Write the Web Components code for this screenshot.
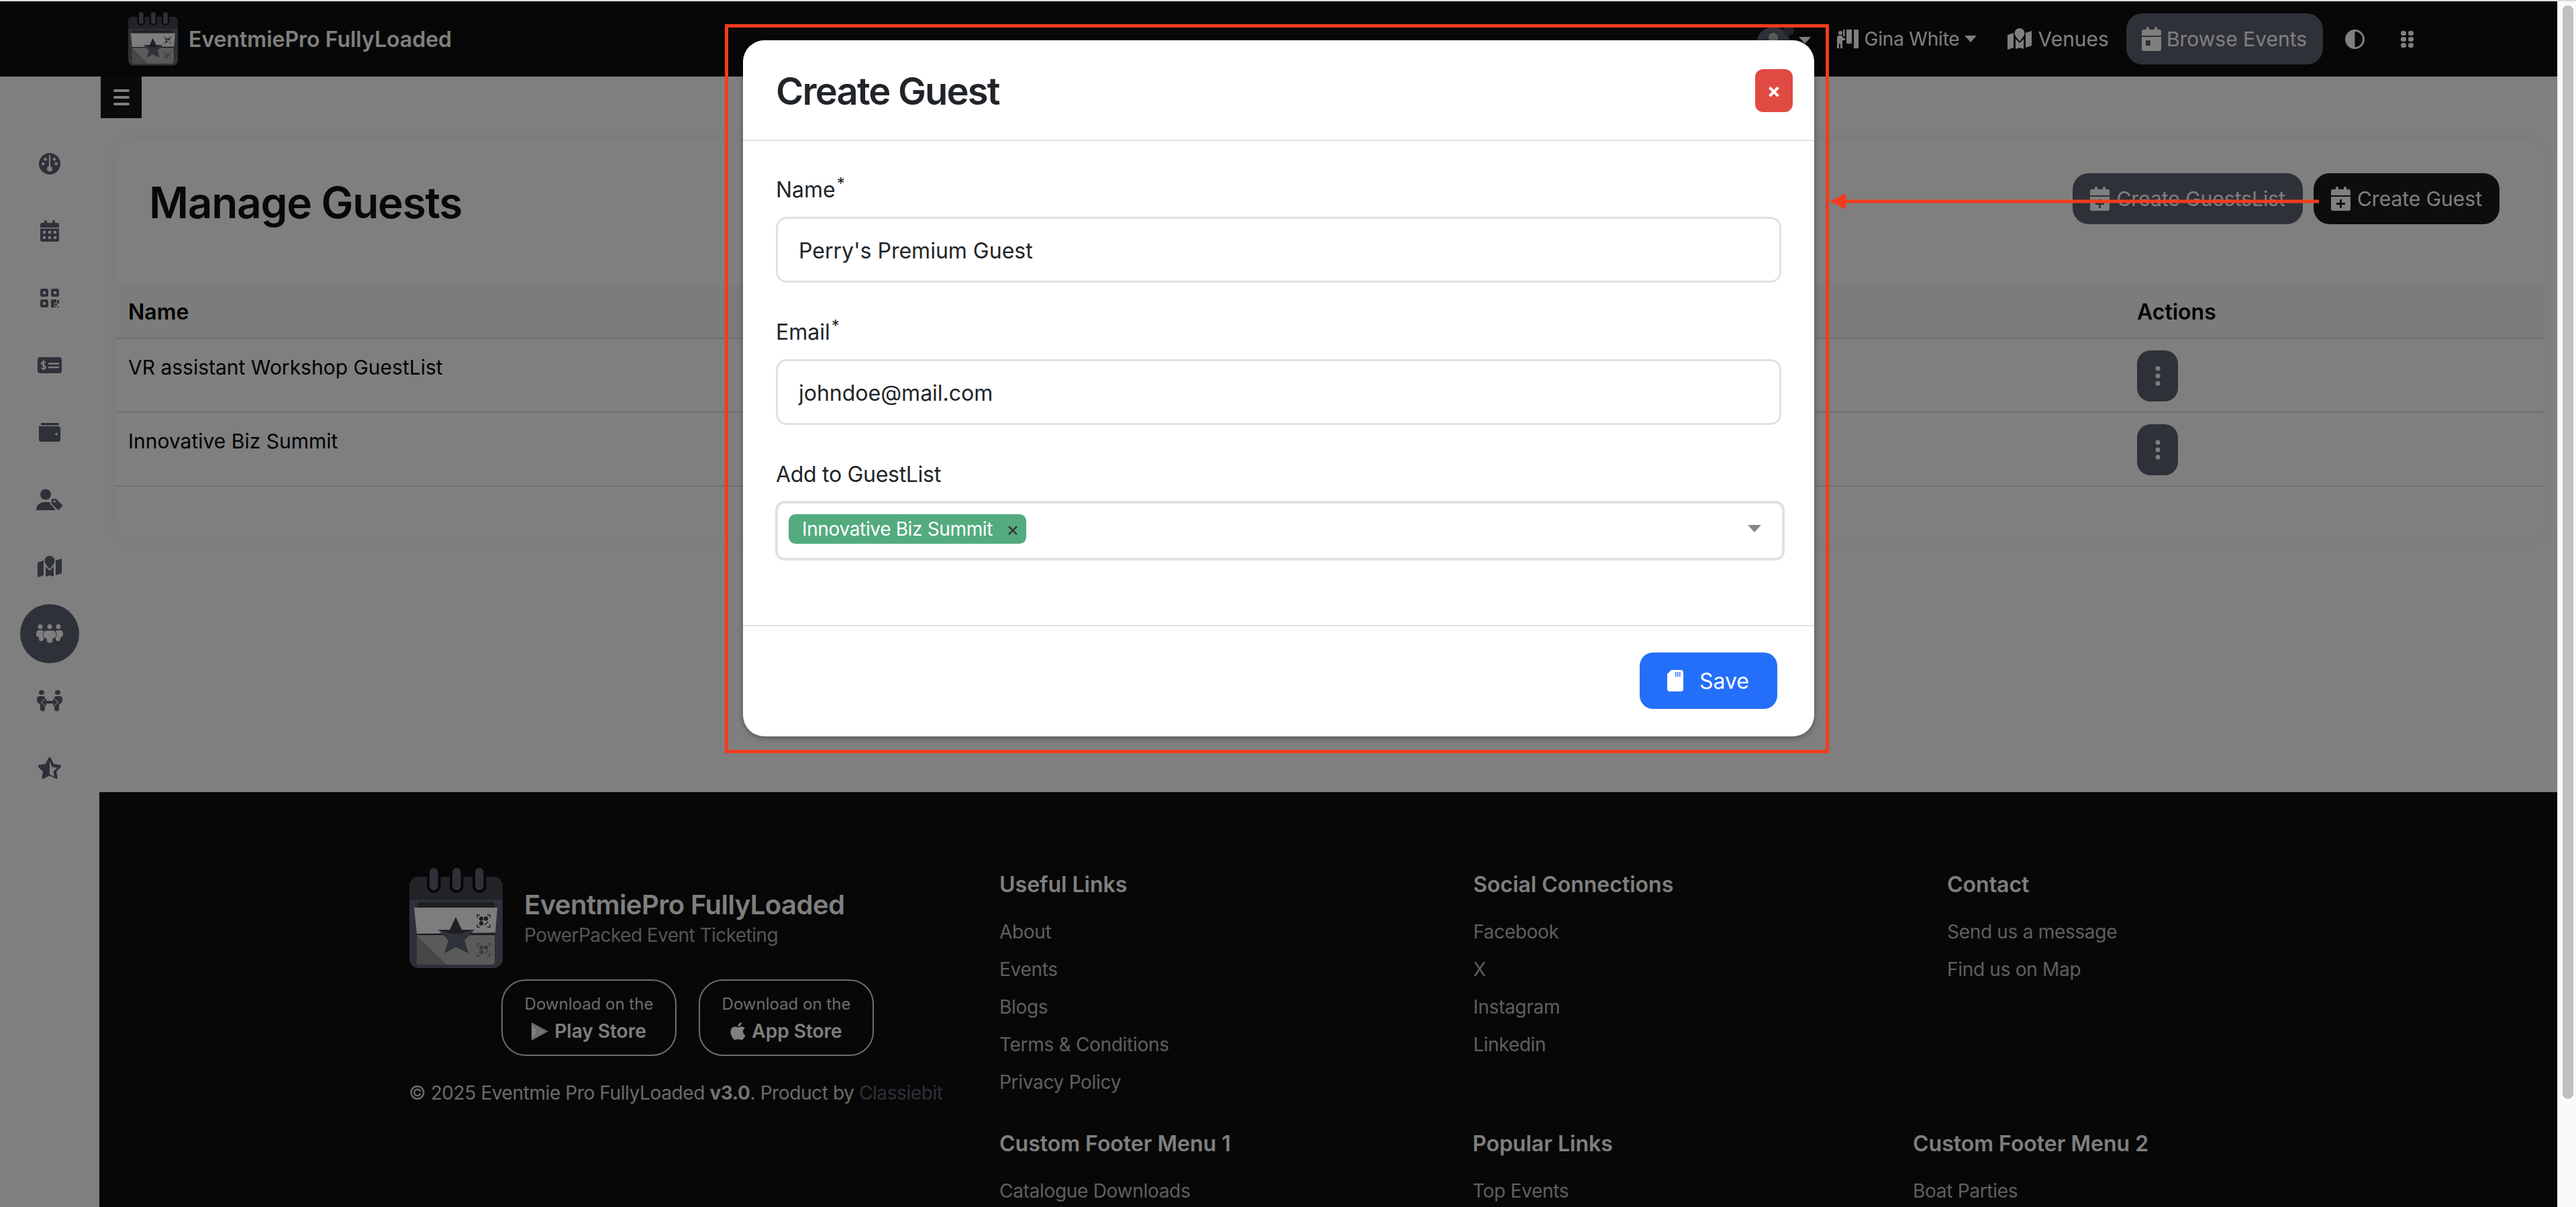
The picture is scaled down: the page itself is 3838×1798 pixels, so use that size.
<!DOCTYPE html>
<html lang="en">
<head>
<meta charset="utf-8">
<title>Manage Guests</title>
<style>
  html,body{ margin:0; padding:0; background:#fff; }
  body{ font-family:Inter,"Noto Sans",sans-serif; width:3838px; height:1798px; overflow:hidden; }
</style>
</head>
<body>
<eb-app>
  <eb-navbar slot="nav"></eb-navbar>
  <eb-sidebar slot="side"></eb-sidebar>
  <eb-guests slot="main"></eb-guests>
  <eb-footer slot="foot"></eb-footer>
  <eb-modal slot="modal" heading="Create Guest">
    <eb-field label="Name" required value="Perry's Premium Guest"></eb-field>
    <eb-field label="Email" required value="johndoe@mail.com"></eb-field>
    <eb-tags label="Add to GuestList" tag="Innovative Biz Summit"></eb-tags>
  </eb-modal>
  <eb-callout slot="modal"></eb-callout>
</eb-app>

<script>
const ICONS = {
  gauge:[32,32,`<path d="M16 0a16 16 0 1 0 0 32a16 16 0 0 0 0-32z"/>
    <g fill="var(--cut,#fff)"><circle cx="6.3" cy="16" r="2.2"/><circle cx="9.7" cy="9.3" r="2.2"/><circle cx="23" cy="9.3" r="2.2"/><circle cx="25.6" cy="16" r="2.2"/><rect x="14.9" y="3" width="2.2" height="18"/><circle cx="16" cy="23.5" r="4"/></g>`],
  calendar:[28,32,`<rect x="6" y="0" width="4" height="7" rx="2"/><rect x="18" y="0" width="4" height="7" rx="2"/><path d="M3 4h22a3 3 0 0 1 3 3v4H0V7a3 3 0 0 1 3-3z"/><path d="M0 12.5h28V29a3 3 0 0 1-3 3H3a3 3 0 0 1-3-3z"/>
    <g fill="var(--cut,#fff)"><rect x="4" y="16" width="4" height="4"/><rect x="12" y="16" width="4" height="4"/><rect x="20" y="16" width="4" height="4"/><rect x="4" y="24" width="4" height="4"/><rect x="12" y="24" width="4" height="4"/><rect x="20" y="24" width="4" height="4"/></g>`],
  qr:[28,28,`<rect width="12" height="12" rx="3"/><rect x="16" width="12" height="12" rx="3"/><rect y="16" width="12" height="12" rx="3"/><rect x="16" y="16" width="5" height="12"/><rect x="21" y="16" width="3" height="5"/><rect x="25" y="17" width="3" height="5"/><rect x="22" y="22" width="3" height="3"/><rect x="22" y="26" width="2" height="2"/><rect x="26" y="26" width="2" height="2"/>
    <g fill="var(--cut,#fff)"><rect x="4" y="4" width="4" height="4"/><rect x="20" y="4" width="4" height="4"/><rect x="4" y="20" width="4" height="4"/></g>`],
  ticket:[36,24,`<rect width="36" height="24" rx="4"/><g fill="var(--cut,#fff)"><rect x="16" y="8.5" width="16" height="2.4"/><rect x="16" y="14" width="16" height="2.4"/></g><path d="M12 8.5c-1-1.5-6-2-6 1c0 3 6 2.5 6 5.5c0 3-5 2.5-6.5 1M9 4.5v15" fill="none" stroke="var(--cut,#fff)" stroke-width="2"/>`],
  wallet:[32,28,`<path d="M3 0h26a2 2 0 0 1 0 3.500H3z"/><path d="M2.500 5H29a3 3 0 0 1 3 3v17a3 3 0 0 1-3 3H3a3 3 0 0 1-3-3V4a3 3 0 0 0 2.500 1z"/><circle cx="26" cy="16.500" r="1.800" fill="var(--cut,#fff)"/>`],
  usertag:[40,32,`<circle cx="14" cy="8.500" r="8"/><path d="M0 32c0-8 6-12 12-12h8l2 3l7 9z"/><path d="M23 14.500h7l9.500 9.500a2 2 0 0 1 0 2.500L34 32a2 2 0 0 1-2.500 0L22 22.500v-7z" stroke="var(--cut,#fff)" stroke-width="1.500"/><circle cx="27" cy="19" r="1.800" fill="var(--cut,#fff)"/>`],
  map:[36,32,`<path d="M0 10l9-3v22l-9 3z"/><path d="M27 7l9-3v22l-9 3z"/><path d="M12 16l6 6l6-6v15l-6-2l-6 2z"/><path d="M18 0a7.500 7.500 0 0 1 7.500 7.500c0 3.500-4.500 9-7.500 12c-3-3-7.500-8.500-7.500-12A7.500 7.500 0 0 1 18 0z"/>`],
  group:[40,28,`<circle cx="6" cy="3.500" r="3.500"/><circle cx="20" cy="3.500" r="3.500"/><circle cx="33" cy="3.500" r="3.500"/><path d="M3 9h6c2 0 2 2 2 4v9c0 1-1 3-3 3H6c-2 0-2-4-2-6c-3 0-4-2-4-4c0-3 1-6 3-6z"/><path d="M37 9h-6c-2 0-2 2-2 4v9c0 1 1 3 3 3h2c2 0 2-4 2-6c3 0 4-2 4-4c0-3-1-6-3-6z"/><path d="M16 9h8c4 0 6 3 6 7s-3 5-5 5c0 3-1 7-3 7h-4c-2 0-3-4-3-7c-2 0-5-1-5-5s2-7 6-7z" stroke="var(--cut,#fff)" stroke-width="1"/>`],
  swap:[38,32,`<ellipse cx="7" cy="3.500" rx="4" ry="3.500"/><ellipse cx="31" cy="3.500" rx="4" ry="3.500"/><path d="M3 9h6c2 0 3 1 3 3v16a3.500 3.500 0 0 1-7 0V21C2 20 0 18 0 14c0-3 1-5 3-5z"/><path d="M35 9h-6c-2 0-3 1-3 3v16a3.500 3.500 0 0 0 7 0V21c3-1 5-3 5-7c0-3-1-5-3-5z"/><path d="M7 18l7-6v4h10v-4l7 6l-7 6v-4H14v4z" stroke="var(--cut,#fff)" stroke-width="1.800" paint-order="stroke"/>`],
  star:[34,32,`<path fill-rule="evenodd" d="M17 0c1 0 1.500.5 2 1.500l4 8.500l9.500 1.500c1.500.5 2 2 1 3L27 21.500l1.800 8.500c.2 1.500-1 2.500-2.500 2L17 27.500L7.700 32c-1.500.5-2.700-.5-2.500-2L7 21.500L0 14.500c-1-1-.5-2.500 1-3L10.500 10l4.500-8.500C15.500.5 16 0 17 0zM17 6v19.500l6.800 3.500l-1.300-8l5.500-5.300l-7.600-1.100z"/>`],
  guest:[32,28,`<circle cx="5" cy="5" r="3"/><path d="M2 9h5l3 4h2v3H8v12H5v-7H3v7H0V12c0-2 1-3 2-3z"/><rect x="9" y="0" width="2.500" height="10"/><path d="M14 0h8v22l-2-2l-2 2l-2-2l-2 2z"/><rect x="25" y="0" width="7" height="28" rx="1"/>`],
  browse:[29,36,`<rect x="7" y="0" width="4" height="8" rx="2"/><rect x="19" y="0" width="4" height="8" rx="2"/><path d="M3 4h23a3 3 0 0 1 3 3v6H0V7a3 3 0 0 1 3-3z"/><path d="M0 15h29v18a3 3 0 0 1-3 3H3a3 3 0 0 1-3-3z"/><rect x="6" y="20" width="7" height="8" fill="var(--cut,#5f6372)"/>`],
  calplus:[29,36,`<rect x="7" y="0" width="4" height="8" rx="2"/><rect x="19" y="0" width="4" height="8" rx="2"/><path d="M3 4h23a3 3 0 0 1 3 3v6H0V7a3 3 0 0 1 3-3z"/><path d="M0 15h29v18a3 3 0 0 1-3 3H3a3 3 0 0 1-3-3z"/><path d="M13 19h3v5h5v3h-5v5h-3v-5H8v-3h5z" fill="var(--cut,#0e0e0e)"/>`],
  contrast:[29,29,`<path fill-rule="evenodd" d="M14.500 0a14.500 14.500 0 1 0 0 29a14.500 14.500 0 0 0 0-29zM14.500 3v23a11.500 11.500 0 0 0 0-23z"/>`],
  grid:[19,25,`<rect width="8" height="7" rx="3"/><rect x="11" width="8" height="7" rx="3"/><rect y="9" width="8" height="7" rx="3"/><rect x="11" y="9" width="8" height="7" rx="3"/><rect y="18" width="8" height="7" rx="3"/><rect x="11" y="18" width="8" height="7" rx="3"/>`],
  dots:[8,30,`<circle cx="4" cy="4" r="3.500"/><circle cx="4" cy="15" r="3.500"/><circle cx="4" cy="26" r="3.500"/>`],
  save:[24,32,`<path fill-rule="evenodd" d="M6 0h14a4 4 0 0 1 4 4v24a4 4 0 0 1-4 4H4a4 4 0 0 1-4-4V6zM15 3v7h1.500V3zM18 3v7h1.500V3zM12 3v7h1.500V3z"/>`],
  play:[25,27,`<path d="M0 0L25 13.500L0 27L9 13.500z" opacity=".8"/><path d="M0 0L9 13.500L0 27z"/><path d="M3 3L20 13.500L3 24L11 13.500z" opacity=".5"/>`],
  apple:[384,512,`<path d="M318.700 268.700c-.2-36.700 16.400-64.400 50-84.800-18.800-26.900-47.200-41.700-84.700-44.600-35.500-2.800-74.300 20.700-88.500 20.700-15 0-49.400-19.700-76.400-19.700C63.300 141.200 4 184.800 4 273.500q0 39.300 14.400 81.200c12.800 36.700 59 126.700 107.200 125.200 25.200-.6 43-17.900 75.800-17.900 31.800 0 48.300 17.900 76.400 17.900 48.600-.7 90.400-82.500 102.600-119.300-65.200-30.700-61.700-90-61.700-91.900zm-56.600-164.200c27.300-32.400 24.800-61.900 24-72.500-24.100 1.400-52 16.400-67.900 34.900-17.500 19.800-27.800 44.300-25.600 71.900 26.100 2 49.900-11.400 69.500-34.300z"/>`]
};

customElements.define('eb-icon', class extends HTMLElement {
  constructor(){ super(); this.attachShadow({mode:'open'}); }
  connectedCallback(){
    const [w,h,inner] = ICONS[this.getAttribute('name')];
    const width = this.getAttribute('w') || w;
    const height = this.getAttribute('h') || h;
    this.shadowRoot.innerHTML = `
    <style>
      :host{ display:inline-flex; flex:none; line-height:0; }
      svg{ display:block; fill:currentColor; }
    </style>
    <svg xmlns="http://www.w3.org/2000/svg" width="${width}" height="${height}" viewBox="0 0 ${w} ${h}">${inner}</svg>`;
  }
});

customElements.define('eb-logo', class extends HTMLElement {
  constructor(){ super(); this.attachShadow({mode:'open'}); }
  connectedCallback(){
    const w = this.getAttribute('w'), h = this.getAttribute('h');
    const bg = this.getAttribute('bg') || '#0e0e0e';
    const qr = (x,y,c) => `<g transform="translate(${x} ${y})" fill="none" stroke="${c}" stroke-width="1.500"><path d="M0 4V0h4M15 0h4v4M0 14v4h4M19 14v4h-4"/><circle cx="6" cy="5.500" r="2.400" fill="${c}"/><circle cx="13" cy="5.500" r="2.400" fill="${c}"/><circle cx="6" cy="12.500" r="2.400" fill="${c}"/><path d="M11 15l5-5"/></g>`;
    this.shadowRoot.innerHTML = `
    <style>
      :host{ display:block; flex:none; line-height:0; }
    </style>
    <svg xmlns="http://www.w3.org/2000/svg" width="${w}" height="${h}" viewBox="0 0 139 150">
      <rect y="13" width="139" height="136" rx="14" fill="#5f6372"/>
      <path d="M14 13h111a14 14 0 0 1 14 14v20H0V27a14 14 0 0 1 14-14z" fill="#44474f"/>
      <g fill="#5f6372" stroke="${bg}" stroke-width="4">
        <rect x="28" y="-2" width="16.500" height="37" rx="8"/>
        <rect x="62" y="-2" width="16.500" height="37" rx="8"/>
        <rect x="96" y="-2" width="16.500" height="37" rx="8"/>
      </g>
      <path d="M15 51h108a4 4 0 0 1 4 4v4H11v-4a4 4 0 0 1 4-4z" fill="#3c3e46"/>
      <path d="M7 59h124l-3 37l-117 2z" fill="#fafafa"/>
      <rect x="11" y="98" width="116" height="1.500" fill="#222"/>
      <path d="M11 100h116v40a4 4 0 0 1-4 4H15a4 4 0 0 1-4-4z" fill="#b4b4b4"/>
      <path d="M11 100l44 44H15a4 4 0 0 1-4-4z" fill="#8f8f8f"/>
      <path d="M69 73l9 19h19l-20 6H61l-20-6h19z" fill="#3c3e46"/>
      <path d="M61 98h16l20-6l-15 16l6 19l-19-9l-17 9l6-19l-15-16z" fill="#5f6372"/>
      ${qr(101,70,'#3c3e46')}
      ${qr(101,113,'#71747f')}
    </svg>`;
  }
});

customElements.define('eb-nav-link', class extends HTMLElement {
  constructor(){ super(); this.attachShadow({mode:'open'}); }
  connectedCallback(){
    this.shadowRoot.innerHTML = `
    <style>
      :host{ display:inline-flex; align-items:center; gap:9px; font-size:30px; color:#fff; height:76px; white-space:nowrap; }
      :host([pill]){ background:#5f6372; border-radius:24px; padding:0 24px 0 23px; gap:8px; --cut:#5f6372; }
      :host([small]){ font-size:28px; letter-spacing:-.2px; }
    </style>
    <slot></slot>`;
  }
});

customElements.define('eb-navbar', class extends HTMLElement {
  constructor(){ super(); this.attachShadow({mode:'open'}); }
  connectedCallback(){
    this.shadowRoot.innerHTML = `
    <style>
      :host{ display:flex; align-items:center; height:112px; background:#0e0e0e; padding:0 214px 0 191px; color:#fff; --cut:#0e0e0e; }
      .brand{ font-size:32px; font-weight:600; margin-left:16px; white-space:nowrap; }
      .right{ margin-left:auto; display:flex; align-items:center; }
      .avatar{ position:relative; width:50px; height:50px; border-radius:50%; background:#5f6372; margin-top:14px; }
      .avatar::before{ content:""; position:absolute; left:18px; top:9px; width:14px; height:14px; border-radius:50%; background:#b8b8b8; }
      .avatar::after{ content:""; position:absolute; right:-6px; top:-3px; width:16px; height:16px; border-radius:50%; background:#44474f; }
      .caret{ width:0; height:0; border:9px solid transparent; border-top:10px solid #fff; border-bottom:0; margin-left:8px; }
      .user-caret{ margin-right:46px; }
      .avatar-caret{ margin:4px 39px 0 13px; }
      .venues{ margin-right:26px; }
      .pill{ margin-right:33px; }
      .contrast{ margin-right:54px; }
    </style>
    <eb-logo w="74" h="80"></eb-logo>
    <span class="brand">EventmiePro FullyLoaded</span>
    <div class="right">
      <span class="avatar"></span><span class="caret avatar-caret"></span>
      <eb-nav-link small><eb-icon name="guest"></eb-icon><span>Gina White</span></eb-nav-link>
      <span class="caret user-caret"></span>
      <eb-nav-link class="venues"><eb-icon name="map" h="32"></eb-icon><span>Venues</span></eb-nav-link>
      <eb-nav-link class="pill" pill><eb-icon name="browse" w="29" h="36"></eb-icon><span>Browse Events</span></eb-nav-link>
      <eb-icon class="contrast" name="contrast"></eb-icon>
      <eb-icon name="grid"></eb-icon>
    </div>`;
  }
});

customElements.define('eb-sidebar', class extends HTMLElement {
  constructor(){ super(); this.attachShadow({mode:'open'}); }
  connectedCallback(){
    const items = ['gauge','calendar','qr','ticket','wallet','usertag','map','group','swap','star'];
    this.shadowRoot.innerHTML = `
    <style>
      :host{ display:flex; flex-direction:column; align-items:center; width:148px; flex:none; background:#fff; color:#5f6372; padding-top:80px; box-sizing:border-box; }
      .item{ height:100px; width:100%; display:flex; align-items:center; justify-content:center; }
      .on{ width:88px; height:88px; border-radius:50%; background:#5f6372; color:#fff; display:flex; align-items:center; justify-content:center; --cut:#5f6372; }
    </style>
    ${items.map(n => `<div class="item">${n==='group' ? `<div class="on"><eb-icon name="${n}"></eb-icon></div>` : `<eb-icon name="${n}"></eb-icon>`}</div>`).join('')}`;
  }
});

customElements.define('eb-button', class extends HTMLElement {
  constructor(){ super(); this.attachShadow({mode:'open'}); }
  connectedCallback(){
    this.shadowRoot.innerHTML = `
    <style>
      :host{ display:inline-flex; align-items:center; gap:10px; height:76px; padding:0 26px; border-radius:24px; background:#5f6372; color:#fff; font-size:30px; white-space:nowrap; --cut:#5f6372; }
      :host([dark]){ background:#1a1a1a; --cut:#1a1a1a; }
      :host([blue]){ background:#246ffa; height:84px; font-size:32px; padding:0 42px 0 41px; gap:24px; border-radius:20px; --cut:#246ffa; }
      :host([square]){ width:61px; padding:0; justify-content:center; border-radius:20px; }
    </style>
    <slot></slot>`;
  }
});

customElements.define('eb-row', class extends HTMLElement {
  constructor(){ super(); this.attachShadow({mode:'open'}); }
  connectedCallback(){
    this.shadowRoot.innerHTML = `
    <style>
      :host{ display:grid; grid-template-columns:2993px 1fr; height:110px; padding-left:17px; border-bottom:2px solid #dedede; box-sizing:border-box; font-size:30px; color:#000; }
      .name{ padding-top:20px; line-height:44px; }
      .act{ padding-top:17px; }
    </style>
    <div class="name"><slot></slot></div>
    <div class="act"><eb-button square><eb-icon name="dots"></eb-icon></eb-button></div>`;
  }
});

customElements.define('eb-guests', class extends HTMLElement {
  constructor(){ super(); this.attachShadow({mode:'open'}); }
  connectedCallback(){
    this.shadowRoot.innerHTML = `
    <style>
      :host{ display:block; position:relative; height:1066px; padding:95px 20px 0 26px; box-sizing:border-box; background:#fff; }
      .burger{ position:absolute; left:2px; top:0; width:61px; height:62px; background:#141414; display:flex; flex-direction:column; justify-content:center; align-items:center; gap:6px; }
      .burger i{ display:block; width:24px; height:4px; border-radius:2px; background:#fff; }
      .card{ height:597px; border-radius:24px; background:#fff; box-shadow:0 0 30px rgba(0,0,0,.05); overflow:hidden; }
      .top{ display:flex; align-items:flex-start; justify-content:space-between; height:215px; padding:0 66px 0 48px; }
      h1{ margin:0; font-size:64px; line-height:90px; margin-top:48px; font-weight:600; color:#111; letter-spacing:-1.3px; }
      .btns{ display:flex; gap:16px; margin-top:49px; }
      .head{ display:grid; grid-template-columns:2993px 1fr; height:81px; padding-left:17px; background:#f9f9f9; border-bottom:2px solid #dedede; box-sizing:border-box; font-size:32px; font-weight:600; color:#000; line-height:81px; }
    </style>
    <div class="burger"><i></i><i></i><i></i></div>
    <div class="card">
      <div class="top">
        <h1>Manage Guests</h1>
        <div class="btns">
          <eb-button><eb-icon name="calplus" w="29" h="36"></eb-icon><span>Create GuestsList</span></eb-button>
          <eb-button dark><eb-icon name="calplus" w="29" h="36"></eb-icon><span>Create Guest</span></eb-button>
        </div>
      </div>
      <div class="head"><span>Name</span><span>Actions</span></div>
      <eb-row>VR assistant Workshop GuestList</eb-row>
      <eb-row>Innovative Biz Summit</eb-row>
    </div>`;
  }
});

customElements.define('eb-footer-col', class extends HTMLElement {
  constructor(){ super(); this.attachShadow({mode:'open'}); }
  connectedCallback(){
    const links = (this.getAttribute('links')||'').split('|');
    this.shadowRoot.innerHTML = `
    <style>
      :host{ display:block; white-space:nowrap; }
      h4{ margin:0 0 22px; font-size:32px; line-height:40px; font-weight:600; color:#fff; }
      a{ display:block; font-size:28px; line-height:56px; color:#bebebe; text-decoration:none; letter-spacing:-.3px; }
    </style>
    <h4>${this.getAttribute('heading')}</h4>
    ${links.map(l => `<a href="#">${l}</a>`).join('')}`;
  }
});

customElements.define('eb-store', class extends HTMLElement {
  constructor(){ super(); this.attachShadow({mode:'open'}); }
  connectedCallback(){
    const isPlay = this.getAttribute('icon') === 'play';
    this.shadowRoot.innerHTML = `
    <style>
      :host{ display:flex; flex-direction:column; align-items:center; justify-content:center; width:261px; height:114px; box-sizing:border-box; border:2px solid #dcdcdc; border-radius:36px; color:#fff; }
      .a{ font-size:24px; line-height:40px; color:#d8d8d8; }
      .b{ display:flex; align-items:center; gap:9px; font-size:28px; line-height:40px; font-weight:600; }
    </style>
    <div class="a">Download on the</div>
    <div class="b">${isPlay ? '<eb-icon name="play"></eb-icon>' : '<eb-icon name="apple" w="23" h="30"></eb-icon>'}<slot></slot></div>`;
  }
});

customElements.define('eb-footer', class extends HTMLElement {
  constructor(){ super(); this.attachShadow({mode:'open'}); }
  connectedCallback(){
    this.shadowRoot.innerHTML = `
    <style>
      :host{ display:grid; grid-template-columns:879px 1fr; background:#0e0e0e; padding:113px 0 0 462px; color:#fff; height:618px; box-sizing:border-box; overflow:hidden; }
      .brand{ display:flex; align-items:center; gap:32px; height:150px; }
      .t{ font-size:40px; line-height:50px; font-weight:600; white-space:nowrap; letter-spacing:-.55px; }
      .s{ font-size:28px; line-height:40px; color:#aaa; white-space:nowrap; letter-spacing:-.55px; }
      .stores{ display:flex; gap:33px; margin:16px 0 0 137px; }
      .copy{ margin:35px 0 0 -1px; font-size:28px; line-height:40px; color:#d6d6d6; white-space:nowrap; letter-spacing:-.4px; }
      .copy b{ color:#e6e6e6; font-weight:700; }
      .copy a{ color:#5f6372; text-decoration:none; }
      .cols{ padding-top:5px; }
      .r1{ display:grid; grid-template-columns:706px 706px 1fr; margin-bottom:44px; }
      .r2{ display:grid; grid-template-columns:705px 656px 1fr; }
    </style>
    <div>
      <div class="brand">
        <eb-logo w="139" h="150"></eb-logo>
        <div><div class="t">EventmiePro FullyLoaded</div><div class="s">PowerPacked Event Ticketing</div></div>
      </div>
      <div class="stores"><eb-store icon="play">Play Store</eb-store><eb-store icon="apple">App Store</eb-store></div>
      <div class="copy">© 2025 Eventmie Pro FullyLoaded <b>v3.0</b>. Product by <a href="#">Classiebit</a></div>
    </div>
    <div class="cols">
      <div class="r1">
        <eb-footer-col heading="Useful Links" links="About|Events|Blogs|Terms &amp; Conditions|Privacy Policy"></eb-footer-col>
        <eb-footer-col heading="Social Connections" links="Facebook|X|Instagram|Linkedin"></eb-footer-col>
        <eb-footer-col heading="Contact" links="Send us a message|Find us on Map"></eb-footer-col>
      </div>
      <div class="r2">
        <eb-footer-col heading="Custom Footer Menu 1" links="Catalogue Downloads"></eb-footer-col>
        <eb-footer-col heading="Popular Links" links="Top Events"></eb-footer-col>
        <eb-footer-col heading="Custom Footer Menu 2" links="Boat Parties"></eb-footer-col>
      </div>
    </div>`;
  }
});

customElements.define('eb-field', class extends HTMLElement {
  constructor(){ super(); this.attachShadow({mode:'open'}); }
  connectedCallback(){
    this.shadowRoot.innerHTML = `
    <style>
      :host{ display:block; margin-bottom:50px; color:#212529; }
      label{ display:block; font-size:32px; line-height:48px; margin-bottom:16px; }
      sup{ font-size:24px; line-height:0; margin-left:2px; }
      .input{ height:98px; box-sizing:border-box; border:3px solid #dee2e6; border-radius:16px; padding:0 31px; font-size:32px; line-height:95px; }
    </style>
    <label>${this.getAttribute('label')}${this.hasAttribute('required') ? '<sup>*</sup>' : ''}</label>
    <div class="input">${this.getAttribute('value')}</div>`;
  }
});

customElements.define('eb-tags', class extends HTMLElement {
  constructor(){ super(); this.attachShadow({mode:'open'}); }
  connectedCallback(){
    this.shadowRoot.innerHTML = `
    <style>
      :host{ display:block; color:#212529; }
      label{ display:block; font-size:32px; line-height:48px; margin-bottom:15px; letter-spacing:-.3px; }
      .box{ display:flex; align-items:center; height:89px; box-sizing:border-box; margin:0 -5px 0 -1px; border:4px solid #e0e1e5; border-radius:14px; padding:0 31px 6px 16px; }
      .tag{ display:flex; align-items:center; height:44px; background:#53ab7e; border-radius:10px; padding:0 10px 0 20px; color:#fff; font-size:28px; white-space:nowrap; letter-spacing:-.35px; }
      .x{ margin-left:20px; color:#333; font-size:30px; line-height:44px; }
      .arrow{ margin-left:auto; width:0; height:0; border:10px solid transparent; border-top:11px solid #888; border-bottom:0; }
    </style>
    <label>${this.getAttribute('label')}</label>
    <div class="box"><div class="tag"><span>${this.getAttribute('tag')}</span><span class="x">×</span></div><span class="arrow"></span></div>`;
  }
});

customElements.define('eb-modal', class extends HTMLElement {
  constructor(){ super(); this.attachShadow({mode:'open'}); }
  connectedCallback(){
    this.shadowRoot.innerHTML = `
    <style>
      :host{ display:block; position:absolute; left:1107px; top:60px; width:1596px; height:1037px; background:#fff; border-radius:32px; box-shadow:0 2px 8px rgba(0,0,0,.35); color:#212529; }
      header{ display:flex; align-items:center; justify-content:space-between; height:150px; box-sizing:border-box; border-bottom:2px solid #dee2e6; padding:0 32px 0 49px; }
      h2{ margin:0; font-size:56px; font-weight:600; line-height:70px; margin-top:3px; letter-spacing:-1.8px; }
      .close{ width:56px; height:64px; border-radius:12px; background:#e04a43; color:#fff; display:flex; align-items:center; justify-content:center; font-size:30px; font-weight:700; margin-top:2px; }
      .body{ height:723px; box-sizing:border-box; padding:49px 49px 0; border-bottom:2px solid #dee2e6; }
      footer{ display:flex; justify-content:flex-end; padding:39px 55px 0 0; }
    </style>
    <header><h2>${this.getAttribute('heading')}</h2><div class="close">×</div></header>
    <div class="body"><slot></slot></div>
    <footer><eb-button blue><eb-icon name="save"></eb-icon><span>Save</span></eb-button></footer>`;
  }
});

customElements.define('eb-callout', class extends HTMLElement {
  constructor(){ super(); this.attachShadow({mode:'open'}); }
  connectedCallback(){
    this.shadowRoot.innerHTML = `
    <style>
      :host{ display:block; position:absolute; left:0; top:0; width:0; height:0; }
      .rect{ position:absolute; left:1080px; top:36px; width:1645px; height:1086px; box-sizing:border-box; border:5px solid #f23c1e; }
      svg{ position:absolute; left:2725px; top:285px; }
    </style>
    <div class="rect"></div>
    <svg xmlns="http://www.w3.org/2000/svg" width="732" height="30" viewBox="0 0 732 30">
      <rect x="20" y="12.500" width="710" height="5" fill="#f23c1e"/>
      <path d="M1 15L25 3v24z" fill="#f23c1e"/>
    </svg>`;
  }
});

customElements.define('eb-app', class extends HTMLElement {
  constructor(){ super(); this.attachShadow({mode:'open'}); }
  connectedCallback(){
    this.shadowRoot.innerHTML = `
    <style>
      :host{ display:block; position:relative; width:3838px; height:1798px; overflow:hidden; }
      .strip{ height:2px; background:#dcdcdc; }
      .wrap{ display:flex; height:1796px; }
      .page{ width:3810px; flex:none; overflow:hidden; }
      .below{ display:flex; height:1684px; }
      .col{ flex:1; min-width:0; }
      .bar{ flex:1; background:#fafafa; border-left:2px solid #ececec; box-sizing:border-box; padding:6px 4px 0 6px; }
      .thumb{ height:1629px; border-radius:8px; background:#c0c0c0; }
      .backdrop{ position:absolute; left:0; top:2px; width:3810px; height:1796px; background:rgba(0,0,0,.5); }
    </style>
    <div class="strip"></div>
    <div class="wrap">
      <div class="page">
        <slot name="nav"></slot>
        <div class="below">
          <slot name="side"></slot>
          <div class="col"><slot name="main"></slot><slot name="foot"></slot></div>
        </div>
      </div>
      <div class="bar"><div class="thumb"></div></div>
    </div>
    <div class="backdrop"></div>
    <slot name="modal"></slot>`;
  }
});
</script>
</body>
</html>
